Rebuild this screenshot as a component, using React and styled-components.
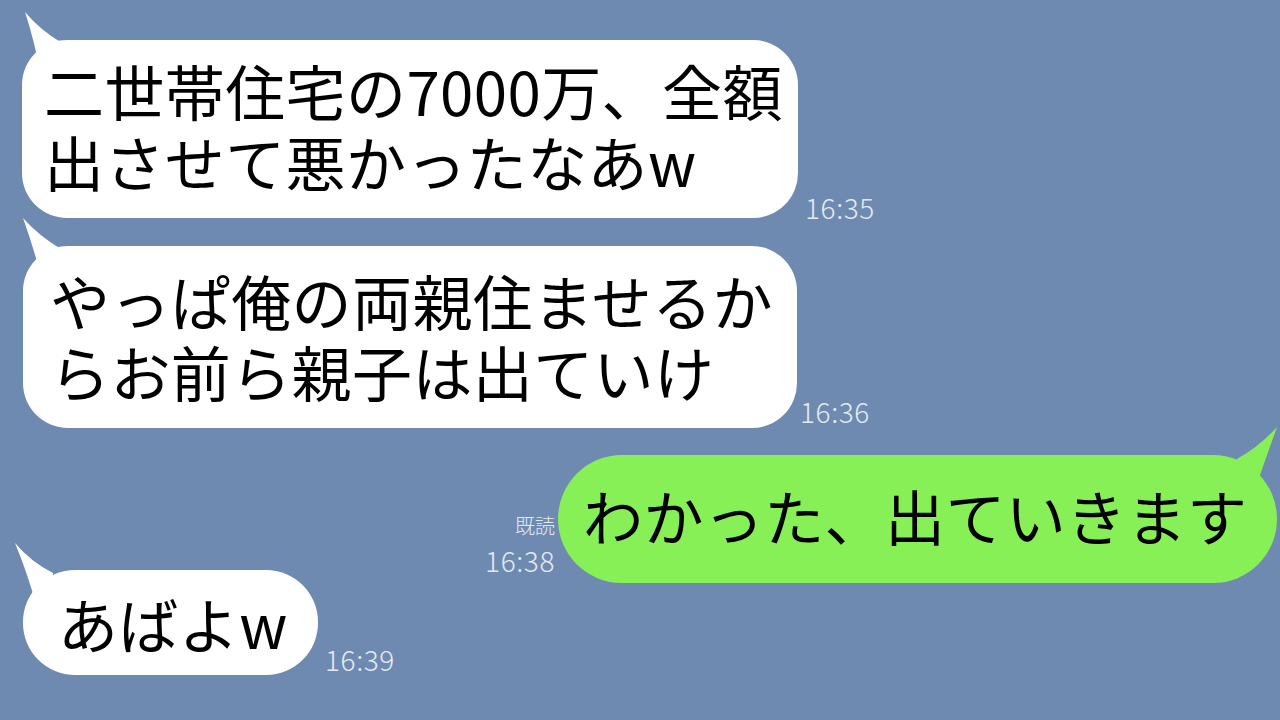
import React from "react";
import styled, { createGlobalStyle } from "styled-components";

const Global = createGlobalStyle`
  html, body { margin: 0; padding: 0; }
  body {
    background: #6f8ab0;
    font-family: "Noto Sans CJK JP", "Noto Sans", sans-serif;
    overflow: hidden;
  }
`;

const Screen = styled.div`
  width: 1280px;
  height: 720px;
  background: #6f8ab0;
  display: flex;
  flex-direction: column;
  overflow: hidden;
`;

const Row = styled.div`
  display: flex;
  align-items: flex-end;
  justify-content: ${(p) => (p.$mine ? "flex-end" : "flex-start")};
  margin-top: ${(p) => p.$mt}px;
  padding-left: ${(p) => p.$pl || 0}px;
  padding-right: ${(p) => p.$pr || 0}px;
`;

const Bubble = styled.div`
  position: relative;
  box-sizing: border-box;
  width: ${(p) => p.$w}px;
  height: ${(p) => p.$h}px;
  border-radius: ${(p) => p.$r}px;
  background: ${(p) => (p.$mine ? "#87f057" : "#ffffff")};
  padding: ${(p) => p.$pad};
  display: flex;
  flex-direction: column;
  justify-content: center;
  color: #000;
  font-family: "Noto Sans CJK JP", "Noto Sans", sans-serif;
  font-size: 60px;
  line-height: ${(p) => p.$lh || 71}px;
  font-weight: 400;
  letter-spacing: 0.4px;
  white-space: nowrap;
`;

const Line = styled.span`
  display: block;
  position: relative;
  z-index: 1;
`;

const Tail = styled.svg`
  position: absolute;
  top: 0;
  left: ${(p) => (p.$right ? "100%" : "0")};
  width: 1px;
  height: 1px;
  overflow: visible;
  z-index: 0;
`;

const Time = styled.span`
  font-family: "Noto Sans CJK JP", "Noto Sans", sans-serif;
  font-weight: 300;
  font-size: 28px;
  line-height: 28px;
  letter-spacing: 0.6px;
  color: #e4eaf2;
  margin-left: ${(p) => p.$gap || 0}px;
  margin-bottom: ${(p) => p.$mb || 0}px;
  white-space: nowrap;
`;

const Meta = styled.div`
  display: flex;
  flex-direction: column;
  align-items: flex-end;
  margin-right: 3px;
  margin-bottom: 9px;
  gap: 10px;
`;

const Read = styled.span`
  font-family: "Noto Sans CJK JP", "Noto Sans", sans-serif;
  font-weight: 300;
  font-size: 20px;
  line-height: 20px;
  color: #e4eaf2;
`;

const MetaTime = styled(Time)`
  margin: 0;
`;

function LeftTail({ d, fill = "#ffffff" }) {
  return (
    <Tail>
      <path d={d} fill={fill} />
    </Tail>
  );
}

export default function App() {
  return (
    <>
      <Global />
      <Screen>
        <Row $mt={40} $pl={22}>
          <Bubble $w={776} $h={178} $r={45} $pad="0 0 8px 22px">
            <LeftTail d="M3,-28 Q18,-10 40,3 L40,30 L18,30 Q12,0 3,-28 Z" />
            <Line>二世帯住宅の7000万、全額</Line>
            <Line>出させて悪かったなあw</Line>
          </Bubble>
          <Time $gap={7} $mb={-3}>16:35</Time>
        </Row>

        <Row $mt={28} $pl={23}>
          <Bubble $w={774} $h={182} $r={45} $pad="0 0 4px 27px">
            <LeftTail d="M0,-28 Q16,-10 38,3 L38,30 L18,30 Q10,0 0,-28 Z" />
            <Line>やっぱ俺の両親住ませるか</Line>
            <Line>らお前ら親子は出ていけ</Line>
          </Bubble>
          <Time $gap={3} $mb={3}>16:36</Time>
        </Row>

        <Row $mt={27} $mine $pr={3}>
          <Meta>
            <Read>既読</Read>
            <MetaTime>16:38</MetaTime>
          </Meta>
          <Bubble $mine $w={719} $h={128} $r={64} $lh={66} $pad="0 0 9px 25px">
            <Tail $right>
              <path
                d="M0,-28 Q-10,0 -17,20 L-17,34 L-40,34 L-40,4 Q-18,-8 0,-28 Z"
                fill="#87f057"
              />
            </Tail>
            <Line>わかった、出ていきます</Line>
          </Bubble>
        </Row>

        <Row $mt={-13} $pl={23}>
          <Bubble $w={295} $h={105} $r={52} $lh={66} $pad="0 0 0 35px">
            <LeftTail d="M-8,-27 Q8,-8 30,3 L30,34 L13,34 Q4,2 -8,-27 Z" />
            <Line>あばよw</Line>
          </Bubble>
          <Time $gap={7} $mb={2}>16:39</Time>
        </Row>
      </Screen>
    </>
  );
}
